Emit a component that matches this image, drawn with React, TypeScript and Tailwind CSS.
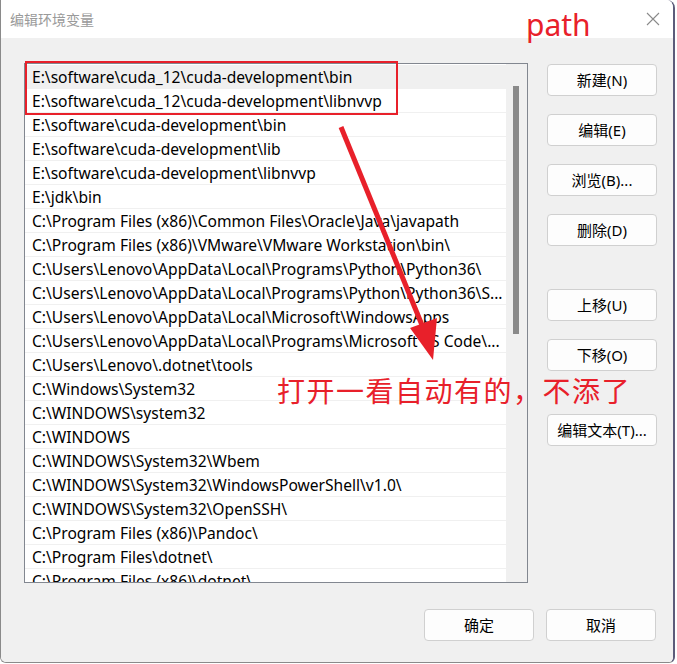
import React from 'react'

const rows = [
  'E:\\software\\cuda_12\\cuda-development\\bin',
  'E:\\software\\cuda_12\\cuda-development\\libnvvp',
  'E:\\software\\cuda-development\\bin',
  'E:\\software\\cuda-development\\lib',
  'E:\\software\\cuda-development\\libnvvp',
  'E:\\jdk\\bin',
  'C:\\Program Files (x86)\\Common Files\\Oracle\\Java\\javapath',
  'C:\\Program Files (x86)\\VMware\\VMware Workstation\\bin\\',
  'C:\\Users\\Lenovo\\AppData\\Local\\Programs\\Python\\Python36\\',
  'C:\\Users\\Lenovo\\AppData\\Local\\Programs\\Python\\Python36\\S...',
  'C:\\Users\\Lenovo\\AppData\\Local\\Microsoft\\WindowsApps',
  'C:\\Users\\Lenovo\\AppData\\Local\\Programs\\Microsoft VS Code\\...',
  'C:\\Users\\Lenovo\\.dotnet\\tools',
  'C:\\Windows\\System32',
  'C:\\WINDOWS\\system32',
  'C:\\WINDOWS',
  'C:\\WINDOWS\\System32\\Wbem',
  'C:\\WINDOWS\\System32\\WindowsPowerShell\\v1.0\\',
  'C:\\WINDOWS\\System32\\OpenSSH\\',
  'C:\\Program Files (x86)\\Pandoc\\',
  'C:\\Program Files\\dotnet\\',
  'C:\\Program Files (x86)\\dotnet\\',
]

function Btn({ label, className = '' }: { label: string; className?: string }) {
  return (
    <button className={`w-[110px] h-[32px] rounded-[4px] border border-[#d0d0d0] bg-[#fdfdfd] text-[15px] text-black ${className}`}>
      {label}
    </button>
  )
}

export default function App() {
  return (
    <div
      className="relative w-[677px] h-[664px] bg-white overflow-hidden"
      style={{ fontFamily: '"Noto Sans", "Noto Sans CJK SC", sans-serif' }}
    >
      <div className="w-[675px] h-[663px] border-l border-r-2 border-b border-[#8a8a8a] border-r-[#5c5c7a] rounded-tr-[8px] rounded-b-[6px] flex flex-col overflow-hidden">
        {/* Title bar */}
        <div className="h-[38px] bg-white flex items-center justify-between pl-[9px] pr-[12px] shrink-0">
          <span className="text-[14px] text-[#9a9a9a]">编辑环境变量</span>
          <svg width="14" height="14" viewBox="0 0 14 14" className="mr-[1px]">
            <path d="M1 1 L13 13 M13 1 L1 13" stroke="#8a8a8a" strokeWidth="1.1" />
          </svg>
        </div>

        {/* Body */}
        <div className="flex-1 bg-[#f0f0f0] flex flex-col pl-[23px]">
          <div className="flex pt-[25px]">
            {/* List */}
            <div className="w-[504px] h-[520px] border border-[#828790] bg-white flex overflow-hidden">
              <div className="flex-1 pt-[1px] overflow-hidden">
                {rows.map((r, i) => (
                  <div
                    key={i}
                    className={`h-[24px] pl-[7px] pt-[2px] flex items-center border-b border-[#f0f0f0] text-[15.6px] text-black whitespace-nowrap overflow-hidden ${i === 0 ? 'bg-[#f0f0f0]' : ''}`}
                  >
                    {r}
                  </div>
                ))}
              </div>
              <div className="w-[21px] bg-[#f0f0f0] shrink-0 pt-[22px] pl-[7px]">
                <div className="w-[6px] h-[248px] bg-[#8a8a8a]" />
              </div>
            </div>

            {/* Buttons */}
            <div className="flex flex-col ml-[19px] pt-[1px]">
              <Btn label="新建(N)" />
              <Btn label="编辑(E)" className="mt-[18px]" />
              <Btn label="浏览(B)..." className="mt-[18px]" />
              <Btn label="删除(D)" className="mt-[18px]" />
              <Btn label="上移(U)" className="mt-[43px]" />
              <Btn label="下移(O)" className="mt-[18px]" />
              <Btn label="编辑文本(T)..." className="mt-[43px]" />
            </div>
          </div>

          <div className="flex justify-end gap-[12px] mt-[26px] pr-[17px]">
            <Btn label="确定" />
            <Btn label="取消" />
          </div>
        </div>
      </div>

      {/* Annotations */}
      <div className="absolute left-[25px] top-[61px] w-[373px] h-[54px] border-2 border-[#e8202a]" />
      <span className="absolute left-[526px] top-[2px] text-[30px] text-[#e8202a]">path</span>
      <svg className="absolute left-0 top-0" width="677" height="664">
        <line x1="341" y1="127" x2="424" y2="330" stroke="#e8202a" strokeWidth="5" />
        <polygon points="433,360 410,328 437,318" fill="#e8202a" />
      </svg>
      <span className="absolute left-[277px] top-[370px] text-[28px] text-[#e8202a] tracking-[1.5px]">
        打开一看自动有的，不添了
      </span>
    </div>
  )
}
